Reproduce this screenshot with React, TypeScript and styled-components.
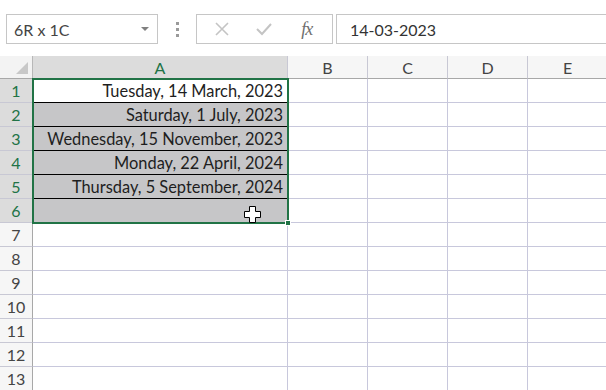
import React from "react";
import styled, { createGlobalStyle } from "styled-components";

const GlobalStyle = createGlobalStyle`
  html, body { margin: 0; padding: 0; background: #ffffff; }
  body { font-family: "Lato", "Open Sans", sans-serif; width: 606px; height: 390px; overflow: hidden; }
  * { box-sizing: border-box; }
`;

const Page = styled.div`
  width: 606px;
  height: 390px;
  display: flex;
  flex-direction: column;
  background: #ffffff;
  overflow: hidden;
`;

const TopBar = styled.div`
  height: 56px;
  flex-shrink: 0;
  display: flex;
  align-items: flex-start;
  padding: 14px 0 0 6px;
  background: #ffffff;
`;

const NameBox = styled.div`
  width: 152px;
  height: 30px;
  border: 1px solid #c6c6c6;
  display: flex;
  align-items: center;
  justify-content: space-between;
  padding: 0 8px 0 7px;
  font-size: 16px;
  color: #444444;
`;

const Caret = styled.span`
  width: 0;
  height: 0;
  border-left: 4px solid transparent;
  border-right: 4px solid transparent;
  border-top: 4px solid #808080;
`;

const Grip = styled.div`
  width: 38px;
  height: 30px;
  display: flex;
  flex-direction: column;
  align-items: center;
  justify-content: center;
  gap: 3px;
`;

const GripDot = styled.span`
  width: 3px;
  height: 3px;
  background: #9a9a9a;
`;

const ButtonGroup = styled.div`
  width: 137px;
  height: 30px;
  border: 1px solid #c6c6c6;
  display: flex;
  align-items: center;
  justify-content: space-around;
  padding: 0 4px;
`;

const IconButton = styled.span`
  width: 30px;
  height: 28px;
  display: flex;
  align-items: center;
  justify-content: center;
`;

const Fx = styled.span`
  font-family: "Liberation Serif", "DejaVu Serif", serif;
  font-style: italic;
  font-size: 18px;
  color: #6e6e6e;
  letter-spacing: -1px;
`;

const FormulaBox = styled.div`
  flex: 1;
  margin-left: 3px;
  height: 30px;
  border: 1px solid #c6c6c6;
  border-right: none;
  display: flex;
  align-items: center;
  padding-left: 13px;
  font-size: 16px;
  color: #333333;
`;

const SheetWrap = styled.div`
  position: relative;
  flex: 1;
  min-height: 0;
  overflow: hidden;
`;

const Grid = styled.div`
  display: grid;
  grid-template-columns: 33px 255px 80px 80px 80px 80px;
  grid-template-rows: 23px repeat(13, 24px);
`;

const Corner = styled.div`
  background: #f3f3f3;
  border-right: 1px solid #b8b8b8;
  border-bottom: 1px solid #a8a8a8;
  position: relative;
`;

const CornerTri = styled.span`
  position: absolute;
  right: 4px;
  bottom: 4px;
  width: 0;
  height: 0;
  border-left: 12px solid transparent;
  border-bottom: 12px solid #c8c8c8;
`;

const ColHead = styled.div<{ $sel?: boolean }>`
  background: ${(p) => (p.$sel ? "#dcdcdc" : "#f6f6f6")};
  border-right: 1px solid #c8c8d4;
  border-bottom: 1px solid ${(p) => (p.$sel ? "#217346" : "#a8a8a8")};
  display: flex;
  align-items: center;
  justify-content: center;
  font-size: 16px;
  color: ${(p) => (p.$sel ? "#217346" : "#444444")};
`;

const RowHead = styled.div<{ $sel?: boolean }>`
  background: ${(p) => (p.$sel ? "#dcdcdc" : "#f6f6f6")};
  border-right: 1px solid ${(p) => (p.$sel ? "#217346" : "#a8a8a8")};
  border-bottom: 1px solid #c8c8d4;
  display: flex;
  align-items: center;
  justify-content: center;
  font-size: 16px;
  color: ${(p) => (p.$sel ? "#217346" : "#444444")};
`;

const Cell = styled.div<{ $fill?: boolean; $rule?: boolean }>`
  background: ${(p) => (p.$fill ? "#c6c6c8" : "#ffffff")};
  border-right: 1px solid #c8c8dc;
  border-bottom: 1px solid ${(p) => (p.$rule ? "#000000" : "#c8c8dc")};
  display: flex;
  align-items: center;
  justify-content: flex-end;
  padding-right: 4px;
  font-size: 16.4px;
  color: #1e1e1e;
  white-space: nowrap;
`;

const Selection = styled.div`
  position: absolute;
  left: 32px;
  top: 22px;
  width: 257px;
  height: 146px;
  border: 2px solid #217346;
  pointer-events: none;
`;

const FillHandle = styled.span`
  position: absolute;
  right: -4px;
  bottom: -4px;
  width: 6px;
  height: 6px;
  background: #217346;
  border: 1px solid #ffffff;
`;

const Cursor = styled.svg`
  position: absolute;
  left: 244px;
  top: 150px;
`;

const dates = [
  "Tuesday, 14 March, 2023",
  "Saturday, 1 July, 2023",
  "Wednesday, 15 November, 2023",
  "Monday, 22 April, 2024",
  "Thursday, 5 September, 2024",
  "",
];

const cols = ["A", "B", "C", "D", "E"];

export default function App() {
  const rows = Array.from({ length: 13 }, (_, i) => i + 1);
  return (
    <Page>
      <GlobalStyle />
      <TopBar>
        <NameBox>
          <span>6R x 1C</span>
          <Caret />
        </NameBox>
        <Grip>
          <GripDot />
          <GripDot />
          <GripDot />
        </Grip>
        <ButtonGroup>
          <IconButton>
            <svg width="16" height="16" viewBox="0 0 16 16">
              <path d="M2 2 L14 14 M14 2 L2 14" stroke="#c4c4c4" strokeWidth="1.6" fill="none" />
            </svg>
          </IconButton>
          <IconButton>
            <svg width="18" height="16" viewBox="0 0 18 16">
              <path d="M2 8 L7 13 L16 3" stroke="#c4c4c4" strokeWidth="2" fill="none" />
            </svg>
          </IconButton>
          <IconButton>
            <Fx>fx</Fx>
          </IconButton>
        </ButtonGroup>
        <FormulaBox>14-03-2023</FormulaBox>
      </TopBar>
      <SheetWrap>
        <Grid>
          <Corner>
            <CornerTri />
          </Corner>
          {cols.map((c, i) => (
            <ColHead key={c} $sel={i === 0}>
              {c}
            </ColHead>
          ))}
          {rows.map((r) => (
            <React.Fragment key={r}>
              <RowHead $sel={r <= 6}>{r}</RowHead>
              <Cell $fill={r >= 2 && r <= 6} $rule={r <= 5}>
                {r <= 6 ? dates[r - 1] : ""}
              </Cell>
              <Cell />
              <Cell />
              <Cell />
              <Cell />
            </React.Fragment>
          ))}
        </Grid>
        <Selection>
          <FillHandle />
        </Selection>
        <Cursor width="17" height="17" viewBox="0 0 17 17">
          <path
            d="M5.5 0.5 H11.5 V5.5 H16.5 V11.5 H11.5 V16.5 H5.5 V11.5 H0.5 V5.5 H5.5 Z"
            fill="#ffffff"
            stroke="#000000"
            strokeWidth="1"
          />
        </Cursor>
      </SheetWrap>
    </Page>
  );
}
